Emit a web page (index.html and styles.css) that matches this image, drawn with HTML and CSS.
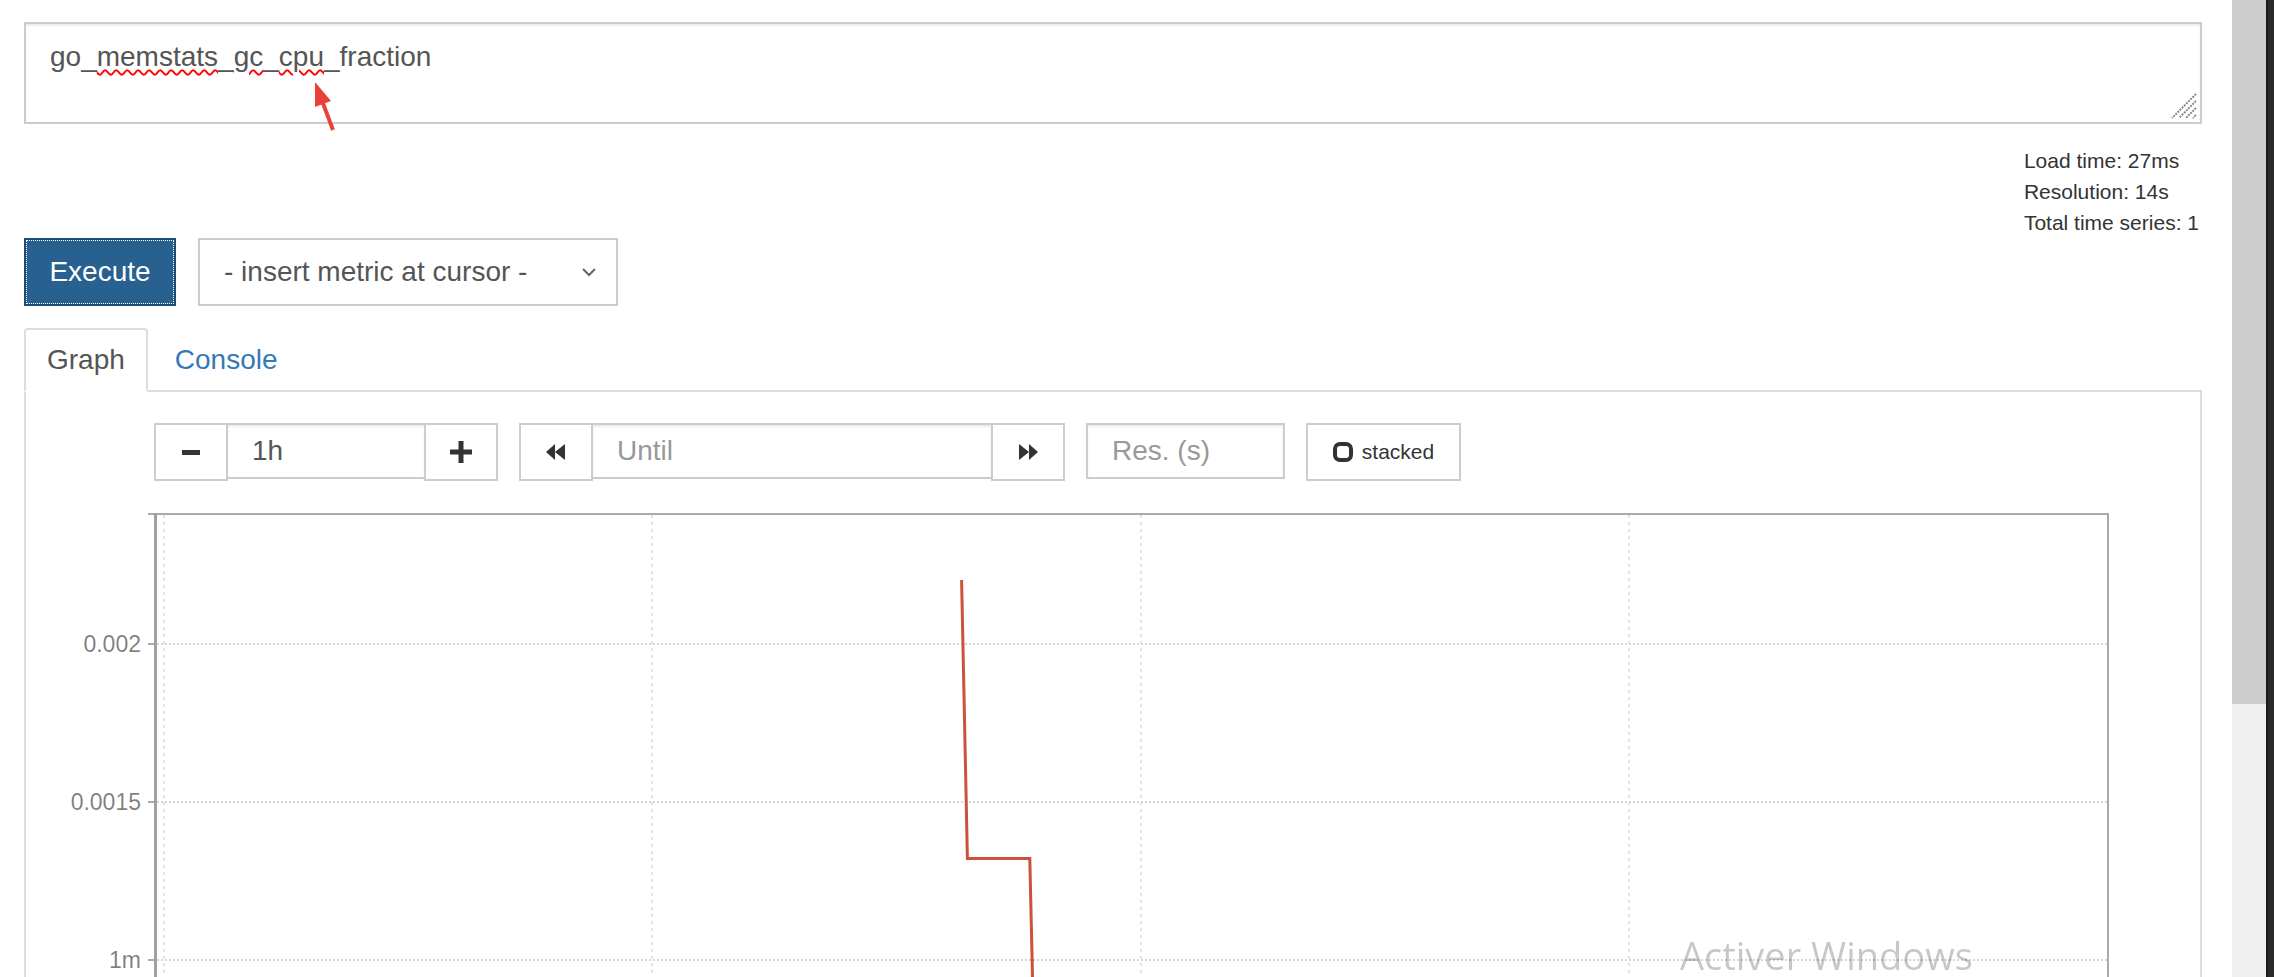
FILE: index.html
```html
<!DOCTYPE html>
<html lang="en">
<head>
  <meta charset="UTF-8">
  <title>Prometheus Time Series Collection and Processing Server</title>
  <link rel="stylesheet" href="styles.css">
</head>
<body>
  <div class="screen">
    <main class="page">
      <!-- Expression input -->
      <div class="expr-wrap">
        <div class="expr-input">go_<span class="typo">memstats</span>_<span class="typo">gc</span>_<span class="typo">cpu</span>_fraction
          <svg class="grip" width="30" height="30" viewBox="0 0 30 30">
            <path d="M28 4 L4 28 M28 11 L11 28 M28 18 L18 28 M28 25 L25 28" stroke="#888" stroke-width="2" stroke-dasharray="2 1"/>
          </svg>
        </div>
        <!-- annotation arrow -->
        <svg class="note-arrow" width="40" height="60" viewBox="300 76 40 60">
          <line x1="333" y1="130" x2="321" y2="98" stroke="#e8403a" stroke-width="4"/>
          <polygon points="315,82 331,101 315,107" fill="#e8403a"/>
        </svg>
      </div>

      <div class="query-stats">
        <div class="stats-lines">
          <div>Load time: 27ms</div>
          <div>Resolution: 14s</div>
          <div>Total time series: 1</div>
        </div>
      </div>

      <!-- Execute row -->
      <div class="exec-row">
        <button class="btn-execute">Execute</button>
        <div class="metric-select">
          <span>- insert metric at cursor -</span>
          <svg width="14" height="9" viewBox="0 0 14 9"><path d="M1 1 L7 7 L13 1" fill="none" stroke="#666" stroke-width="2"/></svg>
        </div>
      </div>

      <!-- Tabs -->
      <ul class="tabs">
        <li class="tab active">Graph</li>
        <li class="tab">Console</li>
      </ul>

      <div class="tab-panel">
        <div class="graph-controls">
          <div class="ctl-group">
            <button class="ctl-btn btn-narrow">
              <svg width="18" height="18" viewBox="0 0 18 18"><rect x="0" y="7" width="18" height="5" fill="#333"/></svg>
            </button>
            <input class="ctl-input range-input" type="text" value="1h">
            <button class="ctl-btn btn-narrow">
              <svg width="22" height="22" viewBox="0 0 22 22"><rect x="0" y="8.5" width="22" height="5" fill="#333"/><rect x="8.5" y="0" width="5" height="22" fill="#333"/></svg>
            </button>
          </div>
          <div class="ctl-group">
            <button class="ctl-btn btn-narrow">
              <svg width="20" height="20" viewBox="0 0 20 20"><path d="M0 10 L9 2 V18 Z M9 10 L19 2 V18 Z" fill="#333"/></svg>
            </button>
            <input class="ctl-input until-input" type="text" placeholder="Until">
            <button class="ctl-btn btn-narrow">
              <svg width="20" height="20" viewBox="0 0 20 20"><path d="M20 10 L11 2 V18 Z M11 10 L1 2 V18 Z" fill="#333"/></svg>
            </button>
          </div>
          <input class="ctl-input res-input" type="text" placeholder="Res. (s)">
          <button class="ctl-btn btn-stacked">
            <svg width="20" height="20" viewBox="0 0 20 20"><rect x="2" y="2" width="16" height="16" rx="5" fill="none" stroke="#333" stroke-width="4"/></svg>
            stacked
          </button>
        </div>

        <!-- Graph -->
        <svg class="chart" width="2174" height="476" viewBox="0 0 2174 476">
          <g stroke="#d6d6d6" stroke-width="2" stroke-dasharray="2 2">
            <line x1="131" y1="143" x2="2081" y2="143"/>
            <line x1="131" y1="301" x2="2081" y2="301"/>
            <line x1="131" y1="459" x2="2081" y2="459"/>
          </g>
          <g stroke="#e2e2e2" stroke-width="2" stroke-dasharray="3 4">
            <line x1="138" y1="14" x2="138" y2="476"/>
            <line x1="626" y1="14" x2="626" y2="476"/>
            <line x1="1115" y1="14" x2="1115" y2="476"/>
            <line x1="1603" y1="14" x2="1603" y2="476"/>
          </g>
          <rect x="122" y="12" width="1961" height="2" fill="#aaa"/>
          <rect x="2081" y="12" width="2" height="464" fill="#aaa"/>
          <rect x="128" y="12" width="3" height="464" fill="#a0a0a0"/>
          <g stroke="#aaa" stroke-width="2">
            <line x1="122" y1="143" x2="128" y2="143"/>
            <line x1="122" y1="301" x2="128" y2="301"/>
            <line x1="122" y1="459" x2="128" y2="459"/>
          </g>
          <g class="axis-label" text-anchor="end">
            <text x="115" y="151">0.002</text>
            <text x="115" y="309">0.0015</text>
            <text x="115" y="467">1m</text>
          </g>
          <path d="M935.6 79 L941.4 357.6 L1003.8 357.6 L1006.6 480" fill="none" stroke="#cb513a" stroke-width="3"/>
        </svg>
      </div>
    </main>
    <div class="scrollbar"><div class="scroll-thumb"></div></div>
    <div class="frame-edge"></div>
  </div>

  <div class="activate-watermark">Activer Windows</div>
</body>
</html>
```

FILE: styles.css
```css
html, body {
  margin: 0;
  height: 977px;
  overflow: hidden;
  background: #fff;
}
body {
  font-family: "Liberation Sans", Arial, sans-serif;
  color: #333;
}
.screen {
  display: flex;
  height: 977px;
}
.page {
  flex: 1;
  padding: 0 30px 0 24px;
  min-width: 0;
}

/* expression box */
.expr-wrap {
  position: relative;
  margin-top: 22px;
}
.expr-input {
  position: relative;
  box-sizing: border-box;
  height: 102px;
  padding: 13px 24px;
  border: 2px solid #ccc;
  box-shadow: inset 0 2px 2px rgba(0, 0, 0, .075);
  font-size: 28px;
  line-height: 40px;
  color: #555;
}
.typo {
  text-decoration: underline wavy #f00;
  text-decoration-thickness: 2px;
  text-underline-offset: 3px;
}
.grip {
  position: absolute;
  right: 2px;
  bottom: 2px;
}
.note-arrow {
  position: absolute;
  left: 276px;
  top: 54px;
}

.query-stats {
  margin-top: 21px;
  display: flex;
  justify-content: flex-end;
  padding-right: 3px;
  font-size: 21px;
  line-height: 31px;
  color: #333;
}

/* execute row */
.exec-row {
  display: flex;
  gap: 22px;
  height: 68px;
}
.btn-execute {
  box-sizing: border-box;
  width: 152px;
  height: 68px;
  background: #286090;
  border: 2px solid #204d74;
  color: #fff;
  font-family: inherit;
  font-size: 28px;
  outline: 1px dotted #fff;
  outline-offset: -3px;
  padding: 0;
}
.metric-select {
  box-sizing: border-box;
  width: 420px;
  height: 68px;
  border: 2px solid #ccc;
  padding: 0 20px 0 24px;
  display: flex;
  align-items: center;
  justify-content: space-between;
  font-size: 28px;
  color: #555;
}

/* tabs */
.tabs {
  list-style: none;
  margin: 22px 0 0;
  padding: 0;
  display: flex;
  gap: 4px;
  border-bottom: 2px solid #ddd;
}
.tab {
  margin-bottom: -2px;
  padding: 10px 21px;
  border: 2px solid transparent;
  border-radius: 4px 4px 0 0;
  font-size: 28px;
  line-height: 40px;
  color: #337ab7;
}
.tab.active {
  color: #555;
  border-color: #ddd #ddd #fff;
  background: #fff;
}
.tab-panel {
  border: 2px solid #ddd;
  border-top: none;
  padding-top: 31px;
  height: 700px;
}

/* graph controls */
.graph-controls {
  display: flex;
  align-items: flex-start;
  gap: 21px;
  padding-left: 128px;
}
.ctl-group {
  display: flex;
  align-items: flex-start;
}
.ctl-group > * + * {
  margin-left: -2px;
}
.ctl-btn {
  box-sizing: border-box;
  height: 58px;
  background: #fff;
  border: 2px solid #ccc;
  display: flex;
  align-items: center;
  justify-content: center;
  padding: 0;
  font-family: inherit;
  color: #333;
}
.btn-narrow {
  width: 74px;
}
.ctl-input {
  box-sizing: border-box;
  height: 56px;
  border: 2px solid #ccc;
  box-shadow: inset 0 2px 2px rgba(0, 0, 0, .075);
  padding: 0 24px;
  font-family: inherit;
  font-size: 28px;
  color: #555;
  outline: none;
}
.ctl-input::placeholder {
  color: #999;
}
.range-input {
  width: 200px;
}
.until-input {
  width: 402px;
}
.res-input {
  width: 199px;
}
.btn-stacked {
  width: 155px;
  gap: 9px;
  font-size: 21px;
}

.chart {
  display: block;
  margin-top: 20px;
}
.axis-label {
  font-family: "Liberation Sans", Arial, sans-serif;
  font-size: 23px;
  fill: rgba(0, 0, 0, .5);
}

/* window chrome */
.scrollbar {
  width: 34px;
  background: #f0f0f0;
}
.scroll-thumb {
  height: 704px;
  background: #cdcdcd;
}
.frame-edge {
  width: 8px;
  background: #2b2b2b;
  border-left: 2px solid #1a1a1a;
  box-sizing: border-box;
}

.activate-watermark {
  position: fixed;
  left: 1680px;
  top: 929px;
  font-family: "Open Sans", sans-serif;
  font-size: 38px;
  color: rgba(0, 0, 0, .22);
  pointer-events: none;
}
```
